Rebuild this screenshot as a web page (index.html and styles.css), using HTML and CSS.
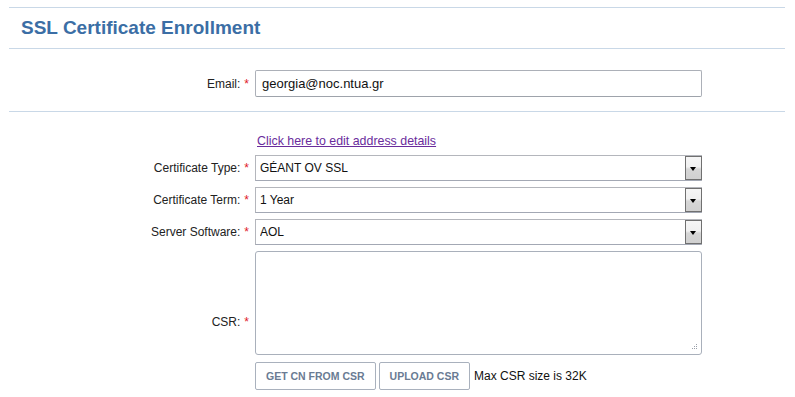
FILE: index.html
```html
<!DOCTYPE html>
<html lang="en">
  <head>
    <meta charset="UTF-8" />
    <meta name="viewport" content="width=device-width, initial-scale=1.0" />
    <title>SSL Certificate Enrollment</title>
    <link rel="stylesheet" href="styles.css">
  </head>
  <body>
    <div class="page">
      <div class="page-header">
        <h1>SSL Certificate Enrollment</h1>
      </div>

      <div class="section email-section">
        <div class="form-grid">
          <label class="field-label" for="email">Email:<span class="req">*</span></label>
          <input class="text-input" id="email" type="text" value="georgia@noc.ntua.gr" />
        </div>
      </div>

      <div class="section cert-section">
        <div class="form-grid">
          <div class="link-row">
            <a href="#" class="edit-link">Click here to edit address details</a>
          </div>

          <label class="field-label" for="cert-type">Certificate Type:<span class="req">*</span></label>
          <div class="select-box">
            <select id="cert-type">
              <option>GÉANT OV SSL</option>
            </select>
            <span class="select-arrow"></span>
          </div>

          <label class="field-label" for="cert-term">Certificate Term:<span class="req">*</span></label>
          <div class="select-box">
            <select id="cert-term">
              <option>1 Year</option>
            </select>
            <span class="select-arrow"></span>
          </div>

          <label class="field-label" for="server-sw">Server Software:<span class="req">*</span></label>
          <div class="select-box">
            <select id="server-sw">
              <option>AOL</option>
            </select>
            <span class="select-arrow"></span>
          </div>

          <label class="field-label csr-label" for="csr">CSR:<span class="req">*</span></label>
          <div class="textarea-box">
            <textarea id="csr"></textarea>
            <svg class="grip" width="7" height="7" viewBox="0 0 7 7">
              <rect x="5" y="0" width="1" height="1" fill="#9aa0aa" />
              <rect x="3" y="2" width="1" height="1" fill="#9aa0aa" />
              <rect x="5" y="2" width="1" height="1" fill="#9aa0aa" />
              <rect x="1" y="4" width="1" height="1" fill="#9aa0aa" />
              <rect x="3" y="4" width="1" height="1" fill="#9aa0aa" />
              <rect x="5" y="4" width="1" height="1" fill="#9aa0aa" />
            </svg>
          </div>

          <div class="csr-actions">
            <button type="button" class="btn">Get CN from CSR</button>
            <button type="button" class="btn">Upload CSR</button>
            <span class="hint">Max CSR size is 32K</span>
          </div>
        </div>
      </div>
    </div>
  </body>
</html>
```

FILE: styles.css
```css
body {
  font-family: "Liberation Sans", Arial, sans-serif;
  margin: 0;
  background-color: #ffffff;
  color: #111;
  font-size: 12px;
}

.page {
  margin: 7px 10px 0 9px;
  border-top: 1px solid #c9d8e7;
}

.page-header {
  height: 40px;
  display: flex;
  align-items: center;
  padding-left: 12px;
  border-bottom: 1px solid #c9d8e7;
}

.page-header h1 {
  margin: 0;
  font-size: 19px;
  font-weight: bold;
  color: #3b6ea5;
}

.email-section {
  padding: 21px 0 14px;
  border-bottom: 1px solid #c9d8e7;
}

.cert-section {
  padding-top: 21px;
}

.form-grid {
  display: grid;
  grid-template-columns: 246px 447px;
  row-gap: 6px;
}

.field-label {
  display: flex;
  justify-content: flex-end;
  align-items: center;
  padding-right: 6px;
  color: #222;
}

.req {
  color: #e0171f;
  margin-left: 4px;
}

.text-input {
  height: 27px;
  box-sizing: border-box;
  border: 1px solid #acb0b8;
  border-bottom-color: #9ea3ab;
  border-radius: 2px;
  padding: 0 6px;
  font-family: inherit;
  font-size: 13px;
  color: #111;
}

.link-row {
  grid-column: 2;
  height: 16px;
  display: flex;
  align-items: center;
  padding-left: 2px;
}

.edit-link {
  color: #6a2c9c;
  text-decoration: underline;
  font-size: 12.4px;
}

.select-box {
  position: relative;
  height: 26px;
}

.select-box select {
  appearance: none;
  width: 100%;
  height: 26px;
  box-sizing: border-box;
  border: 1px solid #b4b6bc;
  border-bottom-color: #a3a8b4;
  border-radius: 0;
  background: #fff;
  padding: 0 4px;
  font-family: inherit;
  font-size: 12px;
  color: #111;
}

.select-arrow {
  position: absolute;
  right: 0;
  top: 1px;
  width: 17px;
  height: 24px;
  box-sizing: border-box;
  border: 1px solid #707070;
  background: linear-gradient(#f6f6f6, #f0f0f0 45%, #d6d6d6 55%, #d0d0d0);
}

.select-arrow::after {
  content: "";
  position: absolute;
  left: 4px;
  top: 10px;
  border-left: 3.5px solid transparent;
  border-right: 3.5px solid transparent;
  border-top: 4px solid #000;
}

.csr-label {
  grid-row: span 2;
  padding-top: 3px;
}

.textarea-box {
  position: relative;
  height: 104px;
}

.textarea-box textarea {
  width: 100%;
  height: 104px;
  box-sizing: border-box;
  border: 1px solid #a9b0bb;
  border-radius: 3px;
  resize: none;
  font-family: inherit;
}

.grip {
  position: absolute;
  right: 4px;
  bottom: 4px;
}

.csr-actions {
  display: flex;
  align-items: center;
  gap: 3px;
  margin-top: 1px;
}

.btn {
  height: 28px;
  box-sizing: border-box;
  padding: 0 10px;
  border: 1px solid #a9b1bd;
  border-radius: 2px;
  background: #fff;
  color: #6a7b93;
  font-family: inherit;
  font-size: 10.5px;
  font-weight: bold;
  text-transform: uppercase;
}

.hint {
  margin-left: 1px;
  font-size: 12px;
  color: #111;
}
```
